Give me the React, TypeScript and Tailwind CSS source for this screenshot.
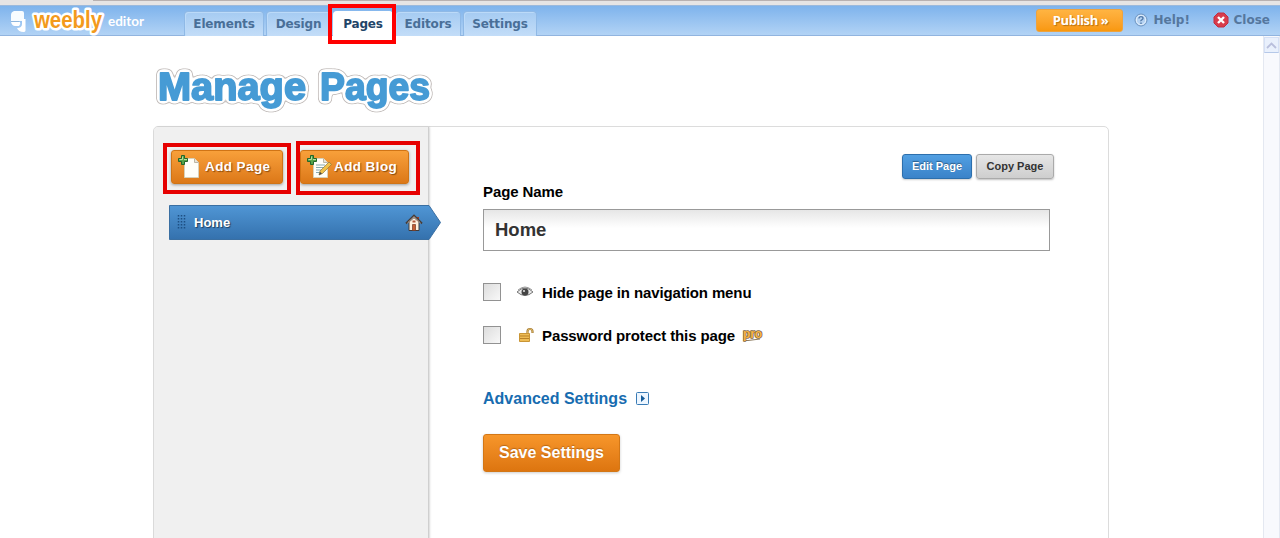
import type { ReactNode } from 'react';

type TabProps = {
  label: string;
  className: string;
  active?: boolean;
};

function Tab({ label, className, active = false }: TabProps) {
  const look = active
    ? 'border-white bg-white text-[#1f4568]'
    : 'border-[#8fb9e6] bg-linear-to-b from-[#a5cbf2] to-[#c3ddf8] text-[#496f98] shadow-[inset_1px_1px_0_#bcdaf8]';

  return (
    <button
      type="button"
      className={`h-[25px] rounded-t-[4px] border border-b-0 pb-px text-center tracking-[-0.15px] whitespace-nowrap ${look} ${className}`}
    >
      {label}
    </button>
  );
}

function Logo() {
  return (
    <svg width="150" height="31" viewBox="0 5 150 31" className="block shrink-0">
      <path d="M14 10h8q2 0 2 2v8H11v-6q0-3 3-4z" fill="#f8fcff" />
      <path d="M11 21h9q1 2-1 4h-4q-3 0-4-4z" fill="#fff" />
      <path d="M25.500 18v11.500q0 1.500-2 1.500-5 0-6.500-4 5 0 5-4v-5z" fill="#fff" />
      <path d="M11 20.500h8" stroke="#8fb6dc" />
      <text
        x="34"
        y="27"
        textLength="68"
        lengthAdjust="spacingAndGlyphs"
        fill="#f39a1c"
        stroke="#fff"
        strokeWidth="5"
        strokeLinejoin="round"
        paintOrder="stroke"
        className="font-['Liberation_Sans'] text-[23px] font-bold"
      >
        weebly
      </text>
      <text
        x="108"
        y="25"
        textLength="36"
        lengthAdjust="spacingAndGlyphs"
        fill="#fff"
        className="font-[Lato] text-[14px] font-bold"
      >
        editor
      </text>
    </svg>
  );
}

function Title() {
  return (
    <svg width="290" height="60" viewBox="153 60 290 60" className="block overflow-visible">
      <defs>
        {/* Rounded white halo with a thin grey rim */}
        <filter id="halo" x="-10%" y="-30%" width="120%" height="170%" colorInterpolationFilters="sRGB">
          <feGaussianBlur in="SourceAlpha" stdDeviation="2.2" />
          <feComponentTransfer result="rim">
            <feFuncR type="linear" slope="0" intercept="0.78" />
            <feFuncG type="linear" slope="0" intercept="0.76" />
            <feFuncB type="linear" slope="0" intercept="0.75" />
            <feFuncA type="linear" slope="30" intercept="-0.8" />
          </feComponentTransfer>
          <feGaussianBlur in="SourceAlpha" stdDeviation="2.2" />
          <feComponentTransfer result="fill">
            <feFuncR type="linear" slope="0" intercept="1" />
            <feFuncG type="linear" slope="0" intercept="1" />
            <feFuncB type="linear" slope="0" intercept="1" />
            <feFuncA type="linear" slope="16" intercept="-1.1" />
          </feComponentTransfer>
          <feMerge>
            <feMergeNode in="rim" />
            <feMergeNode in="fill" />
            <feMergeNode in="SourceGraphic" />
          </feMerge>
        </filter>
      </defs>
      <g
        fill="#469bd5"
        stroke="#469bd5"
        strokeWidth="1.800"
        strokeLinejoin="round"
        filter="url(#halo)"
        className="font-['Liberation_Sans'] text-[39px] font-bold"
      >
        <text x="158" y="100" textLength="148" lengthAdjust="spacingAndGlyphs">
          Manage
        </text>
        <text x="320" y="100" textLength="110" lengthAdjust="spacingAndGlyphs">
          Pages
        </text>
      </g>
    </svg>
  );
}

function HelpIcon() {
  return (
    <svg width="14" height="14" viewBox="0 0 14 14">
      <circle cx="7" cy="7" r="6" fill="#b5d2f2" stroke="#6f95c0" />
      <circle cx="7" cy="7" r="4.7" fill="none" stroke="#e4f0fc" />
      <path d="M5 5.6q0-2 2-2t2 1.7q0 1-1.2 1.5T7 8.3M7 9.6v1.3" fill="none" stroke="#527aa9" strokeWidth="1.4" />
    </svg>
  );
}

function CloseIcon() {
  return (
    <svg width="16" height="16" viewBox="0 0 16 16">
      <path d="M5 1h6l4 4v6l-4 4H5l-4-4V5z" fill="#d83c4c" stroke="#c22c40" strokeLinejoin="round" />
      <path d="M5 5l6 6M11 5l-6 6" stroke="#fff" strokeWidth="2.4" />
    </svg>
  );
}

function AddIcon({ pencil = false }: { pencil?: boolean }) {
  return (
    <svg width="26" height="26" viewBox="0 0 26 26" className="shrink-0">
      <path d="M7.500 4.500h10l4 4v15h-14z" fill="#fffef8" stroke="#d8d0b8" />
      <path d="M17.500 4.500v4h4" fill="#e7e3d8" stroke="#bcb6a5" />
      {pencil && (
        <>
          <path d="M10 11h9M10 13.500h8M10 16h6M10 18.500h5" stroke="#87a9b0" />
          <path d="M13 21l1-4 9-9 2.500 2.500-9 9z" fill="#efc14a" stroke="#8b7943" strokeWidth=".7" />
          <path d="M13 21l1-3 2 1.500z" fill="#444" />
        </>
      )}
      <path d="M4.500 1.500h3v3h3v3h-3v3h-3v-3h-3v-3h3z" fill="#55a34a" stroke="#24662a" />
      <path d="M2.500 5.500h3v-3M7 5.500h3" fill="none" stroke="#b6dfa3" />
    </svg>
  );
}

type AddButtonProps = { className: string; children: ReactNode };

function AddButton({ className, children }: AddButtonProps) {
  return (
    <button
      type="button"
      className={`flex h-[34px] items-center rounded-[3px] border border-[#d07415] bg-linear-to-b from-[#f8a03a] to-[#dc7817] text-[13.5px] font-bold tracking-[0.4px] whitespace-nowrap text-white shadow-[0_1px_3px_rgba(0,0,0,0.35)] text-shadow-[1px_1px_1px_rgba(100,50,0,0.7)] ${className}`}
    >
      {children}
    </button>
  );
}

function HomeIcon() {
  return (
    <svg width="18" height="18" viewBox="0 0 18 18">
      <path d="M4 8v8.500h10V8L9 3.500z" fill="#fff1df" stroke="#443c39" />
      <path d="M12 3h2v4h-2z" fill="#a43d28" />
      <path d="M1 9.500l8-8 8 8" fill="none" stroke="#443c39" strokeWidth="1.800" />
      <path d="M2.500 9L9 2.700 15.500 9" fill="none" stroke="#e7c9b5" strokeWidth=".8" />
      <path d="M7.500 10.500h3v6h-3z" fill="#c75d32" stroke="#713826" strokeWidth=".7" />
      <path d="M7.500 6.500h3v2h-3z" fill="#b1563a" />
    </svg>
  );
}

function EyeIcon() {
  return (
    <svg width="18" height="14" viewBox="0 0 18 14" className="-ml-px">
      <path d="M1 7q8-8 16 0-8 7-16 0z" fill="#e9e9e9" stroke="#777" />
      <path d="M2 5q7-6 14 0" fill="none" stroke="#999" />
      <circle cx="9" cy="7" r="3.500" fill="#444" />
      <circle cx="8" cy="6" r="1.100" fill="#ddd" />
    </svg>
  );
}

function LockIcon() {
  return (
    <svg width="16" height="16" viewBox="0 0 16 16" className="ml-px">
      <path d="M9.500 7V4.500q0-2.500 2.500-2.500t2.500 2.500V6" fill="none" stroke="#a77b32" strokeWidth="2.200" />
      <path d="M9.500 7V4.500q0-2.500 2.500-2.500t2.500 2.500v1" fill="none" stroke="#e9c675" strokeWidth=".8" />
      <path d="M1.500 6.500h10v8h-10z" fill="#eebc55" stroke="#c99535" />
      <path d="M2 9h9M2 11.500h9" stroke="#b98127" />
    </svg>
  );
}

function ProBadge() {
  return (
    <svg width="24" height="16" viewBox="0 0 24 16" className="ml-1.5">
      <path d="M3 12.500h4l12-1.500" fill="none" stroke="#8c7a5e" />
      <text
        x="2"
        y="9.500"
        textLength="19"
        lengthAdjust="spacingAndGlyphs"
        fill="#f9b545"
        stroke="#7d6542"
        strokeWidth="1.600"
        strokeLinejoin="round"
        paintOrder="stroke"
        className="font-['Liberation_Sans'] text-[12px] font-bold"
      >
        pro
      </text>
    </svg>
  );
}

function CheckRow({ icon, children }: { icon: ReactNode; children: ReactNode }) {
  return (
    <label className="flex h-[18px] items-center text-[15px] font-bold tracking-[-0.11px] text-black">
      <span className="size-[18px] shrink-0 border border-[#929292] bg-linear-to-br from-[#dddddd] to-[#f8f8f8]" />
      <span className="ml-4 flex w-[25px] shrink-0 items-center">{icon}</span>
      <span className="mt-0.5 whitespace-nowrap">{children}</span>
    </label>
  );
}

export default function App() {
  return (
    <div className="relative flex h-[538px] w-[1280px] flex-col overflow-hidden bg-white font-['Liberation_Sans',Arial,sans-serif]">
      <div className="flex h-[5px] shrink-0 flex-col bg-[#e6e4e4]">
        <div className="ml-[93px] h-px bg-[#b8b1b1]" />
      </div>

      <header className="flex h-[31px] shrink-0 border-t border-b border-t-[#9bb9dc] border-b-[#91b4df] bg-linear-to-b from-[#7eb3ec] to-[#b2d3f5] font-['DejaVu_Sans',Verdana,sans-serif] text-[12px] font-bold">
        <Logo />
        <nav className="mt-[5px] ml-[34px] flex gap-[2px]">
          <Tab label="Elements" className="w-[80px]" />
          <Tab label="Design" className="w-[65px]" />
          <Tab label="Pages" className="w-[60px]" active />
          <Tab label="Editors" className="w-[66px]" />
          <Tab label="Settings" className="w-[74px]" />
        </nav>
        <div className="mr-[10px] ml-auto flex h-[28px] items-center text-[#55779e]">
          <button
            type="button"
            className="h-[23px] w-[87px] rounded-[3px] border border-[#eda340] bg-linear-to-b from-[#ffb441] to-[#f9980d] pl-[3px] font-['Open_Sans'] text-[13px] leading-none font-bold tracking-[-0.4px] text-white text-shadow-[1px_1px_1px_rgba(140,80,0,0.6)]"
          >
            Publish »
          </button>
          <span className="ml-[11px] flex w-[79px] items-center gap-[6px]">
            <HelpIcon />
            Help!
          </span>
          <span className="flex items-center gap-[5px]">
            <CloseIcon />
            Close
          </span>
        </div>
      </header>

      <div className="flex min-h-0 flex-1">
        <main className="ml-[153px] w-[956px]">
          <h1 className="h-[90px] pt-6">
            <Title />
          </h1>

          <section className="flex h-[430px] rounded-t-[5px] border border-[#dcdcdc]">
            <aside className="w-[275px] shrink-0 rounded-tl-[4px] border-r border-[#cfcfcf] bg-[#f0f0f0] pt-[23px] shadow-[1px_0_2px_rgba(0,0,0,0.15)]">
              <div className="ml-[17px] flex gap-[17px]">
                <AddButton className="w-[112px] gap-[2px] pl-[5px]">
                  <AddIcon />
                  Add Page
                </AddButton>
                <AddButton className="w-[109px] gap-[2px] pl-[5px]">
                  <AddIcon pencil />
                  Add Blog
                </AddButton>
              </div>

              <div className="relative mt-[21px] ml-[15px] flex h-[35px] w-[272px] items-center text-[13px] font-bold text-white">
                <svg width="272" height="35" className="absolute inset-0">
                  <defs>
                    <linearGradient id="home-row" x2="0" y2="1">
                      <stop stopColor="#5096d5" />
                      <stop offset="1" stopColor="#3471ad" />
                    </linearGradient>
                  </defs>
                  <path d="M.5.5H260l11.500 17-11.500 17H.5z" fill="url(#home-row)" stroke="#3a6fa2" />
                </svg>
                <svg width="10" height="17" className="relative ml-2">
                  <path
                    d="M1.500 1v15M4.500 1v15M7.500 1v15"
                    stroke="#1d4f83"
                    strokeWidth="1.500"
                    strokeDasharray="1.500 1.500"
                  />
                </svg>
                <span className="relative ml-[7px] text-shadow-[1px_1px_1px_rgba(0,0,0,0.5)]">Home</span>
                <span className="relative mr-[18px] ml-auto">
                  <HomeIcon />
                </span>
              </div>
            </aside>

            <form className="ml-[54px] flex w-[571px] flex-col pt-[27px]">
              <div className="flex h-[25px] justify-end gap-1 text-[11px] font-bold">
                <button
                  type="button"
                  className="w-[70px] rounded-[3px] border border-[#2d6fac] bg-linear-to-b from-[#519fe2] to-[#3b83c9] text-white shadow-[0_1px_2px_rgba(0,0,0,0.2)] text-shadow-[0_-1px_1px_rgba(0,0,0,0.4)]"
                >
                  Edit Page
                </button>
                <button
                  type="button"
                  className="w-[78px] rounded-[3px] border border-[#aaa] bg-linear-to-b from-[#e6e6e6] to-[#cecece] text-[#333] shadow-[0_1px_2px_rgba(0,0,0,0.25)]"
                >
                  Copy Page
                </button>
              </div>

              <div className="mt-1 text-[15px] leading-[18px] font-bold tracking-[-0.1px] text-black">Page Name</div>
              <div className="mt-2 flex h-[42px] w-[567px] items-center border border-[#999] bg-linear-to-b from-[#e6e6e6] to-white to-45% pl-[11px] text-[18.5px] font-bold text-[#333]">
                Home
              </div>

              <div className="mt-8 flex flex-col gap-[25px]">
                <CheckRow icon={<EyeIcon />}>Hide page in navigation menu</CheckRow>
                <CheckRow icon={<LockIcon />}>
                  <span className="flex items-center">
                    Password protect this page
                    <ProBadge />
                  </span>
                </CheckRow>
              </div>

              <div className="mt-[45px] flex h-[18px] items-center gap-[9px] text-[16px] font-bold text-[#176cb0]">
                <span className="pt-[2px]">Advanced Settings</span>
                <svg width="13" height="13" viewBox="0 0 13 13">
                  <rect x=".5" y=".5" width="12" height="12" rx="1" fill="#edf6ff" stroke="#397bb5" />
                  <path d="M5 3l4 3.500L5 10z" fill="#155c9a" />
                </svg>
              </div>

              <button
                type="button"
                className="mt-[27px] h-[38px] w-[137px] shrink-0 rounded-[3px] border border-[#d37716] bg-linear-to-b from-[#f7962a] to-[#dd750f] text-[16px] font-bold text-white shadow-[0_1px_3px_rgba(0,0,0,0.2)] text-shadow-[0_-1px_1px_rgba(100,50,0,0.4)]"
              >
                Save Settings
              </button>
            </form>
          </section>
        </main>

        <div className="ml-auto w-[17px] border-x border-[#e4e8f1] bg-[#f8f9fd]">
          <div className="mt-px flex h-4 items-center justify-center border border-[#d5e0f5] border-b-[#b5c8e8] bg-[#e9f0fc]">
            <svg width="11" height="7">
              <path d="M1 6l4.500-4.500L10 6" fill="none" stroke="#b9bfdc" strokeWidth="1.800" />
            </svg>
          </div>
        </div>
      </div>

      {/* Callout frames */}
      <div className="absolute top-[4px] left-[328px] h-[40px] w-[68px] border-4 border-[#ff0000]" />
      <div className="absolute top-[143px] left-[163px] h-[51px] w-[128px] border-4 border-[#e60000]" />
      <div className="absolute top-[141px] left-[296px] h-[54px] w-[124px] border-4 border-[#e60000]" />
    </div>
  );
}
